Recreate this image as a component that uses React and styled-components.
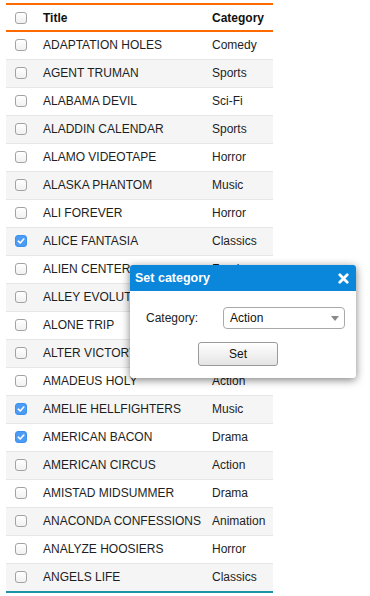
import React from "react";
import styled, { createGlobalStyle } from "styled-components";

const Global = createGlobalStyle`
  html, body { margin: 0; padding: 0; background: #fff; }
  body { font-family: "Liberation Sans", Arial, sans-serif; color: #1e1e1e; }
`;

const Page = styled.div`
  position: relative;
  width: 370px;
  height: 596px;
  padding: 3px 0 0 6px;
  box-sizing: border-box;
`;

const Grid = styled.div`
  width: 267px;
  display: flex;
  flex-direction: column;
`;

const HeaderRow = styled.div`
  display: grid;
  grid-template-columns: 29px 169px 1fr;
  align-items: center;
  height: 25px;
  border-top: 2px solid #ff6a00;
  border-bottom: 2px solid #ff6a00;
  font-weight: bold;
  font-size: 12px;
  color: #111;
`;

const Row = styled.div`
  display: grid;
  grid-template-columns: 29px 169px 1fr;
  align-items: center;
  height: 26px;
  padding-bottom: 1px;
  background: ${(p) => (p.$alt ? "#f5f5f5" : "#fff")};
  border-bottom: ${(p) => (p.$last ? "2px solid #1a93a5" : "1px solid #e6e6e6")};
  font-size: 12px;
  color: #1e1e1e;
`;

const Cell = styled.div`
  padding-left: ${(p) => p.$pl || 8}px;
  white-space: nowrap;
  display: flex;
  align-items: center;
`;

const Box = styled.span`
  display: inline-block;
  width: 12px;
  height: 12px;
  box-sizing: border-box;
  border-radius: 3px;
  border: 1px solid ${(p) => (p.$on ? "#3d8ff0" : "#a3a3a3")};
  background: ${(p) =>
    p.$on ? "#4c9cf6" : "linear-gradient(#ffffff, #f0f0f0)"};
  position: relative;
`;

const Check = () => (
  <svg width="10" height="10" viewBox="0 0 10 10" style={{ position: "absolute", left: 0, top: 0 }}>
    <path d="M2.3 5.2 L4.2 7 L7.8 3" fill="none" stroke="#fff" strokeWidth="1.6" strokeLinecap="round" strokeLinejoin="round" />
  </svg>
);

const Checkbox = ({ on }) => <Box $on={on}>{on && <Check />}</Box>;

const Dialog = styled.div`
  position: absolute;
  left: 130px;
  top: 265px;
  width: 226px;
  height: 113px;
  background: #fff;
  border-radius: 3px;
  box-shadow: 0 2px 9px rgba(0, 0, 0, 0.5);
  overflow: hidden;
  display: flex;
  flex-direction: column;
`;

const DialogHeader = styled.div`
  height: 26px;
  background: #0a86da;
  color: #fff;
  display: flex;
  align-items: center;
  justify-content: space-between;
  padding: 0 7px 0 5px;
  font-weight: bold;
  font-size: 12.5px;
`;

const DialogBody = styled.div`
  padding: 16px 11px 12px 16px;
  display: flex;
  flex-direction: column;
  gap: 13px;
`;

const FieldRow = styled.div`
  display: flex;
  align-items: center;
  font-size: 12px;
  color: #222;
`;

const Label = styled.span`
  width: 77px;
`;

const Select = styled.div`
  width: 122px;
  height: 22px;
  box-sizing: border-box;
  border: 1px solid #a9a9a9;
  border-radius: 4px;
  display: flex;
  align-items: center;
  justify-content: space-between;
  padding: 0 5px 0 6px;
  font-size: 12px;
  color: #111;
  background: #fff;
`;

const Arrow = styled.span`
  width: 0;
  height: 0;
  border-left: 4px solid transparent;
  border-right: 4px solid transparent;
  border-top: 5px solid #8a8a8a;
`;

const ButtonRow = styled.div`
  padding-left: 52px;
  display: flex;
`;

const Button = styled.button`
  width: 80px;
  height: 24px;
  border: 1px solid #9a9a9a;
  border-radius: 3px;
  background: linear-gradient(#ffffff, #e4e4e4);
  font-family: "Liberation Sans", Arial, sans-serif;
  font-size: 12px;
  color: #111;
  padding: 0;
`;

const Close = () => (
  <svg width="11" height="11" viewBox="0 0 11 11">
    <path d="M1.8 1.8 L9.2 9.2 M9.2 1.8 L1.8 9.2" stroke="#fff" strokeWidth="2.8" strokeLinecap="round" />
  </svg>
);

const rows = [
  ["ADAPTATION HOLES", "Comedy"],
  ["AGENT TRUMAN", "Sports"],
  ["ALABAMA DEVIL", "Sci-Fi"],
  ["ALADDIN CALENDAR", "Sports"],
  ["ALAMO VIDEOTAPE", "Horror"],
  ["ALASKA PHANTOM", "Music"],
  ["ALI FOREVER", "Horror"],
  ["ALICE FANTASIA", "Classics", true],
  ["ALIEN CENTER", "Foreign"],
  ["ALLEY EVOLUTION", "Foreign"],
  ["ALONE TRIP", "Music"],
  ["ALTER VICTORY", "Animation"],
  ["AMADEUS HOLY", "Action"],
  ["AMELIE HELLFIGHTERS", "Music", true],
  ["AMERICAN BACON", "Drama", true],
  ["AMERICAN CIRCUS", "Action"],
  ["AMISTAD MIDSUMMER", "Drama"],
  ["ANACONDA CONFESSIONS", "Animation"],
  ["ANALYZE HOOSIERS", "Horror"],
  ["ANGELS LIFE", "Classics"],
];

export default function App() {
  return (
    <Page>
      <Global />
      <Grid>
        <HeaderRow>
          <Cell $pl={9}><Checkbox /></Cell>
          <Cell>Title</Cell>
          <Cell>Category</Cell>
        </HeaderRow>
        {rows.map(([t, c, on], i) => (
          <Row key={t} $alt={i % 2 === 1} $last={i === rows.length - 1}>
            <Cell $pl={9}><Checkbox on={on} /></Cell>
            <Cell>{t}</Cell>
            <Cell>{c}</Cell>
          </Row>
        ))}
      </Grid>
      <Dialog>
        <DialogHeader>
          <span>Set category</span>
          <Close />
        </DialogHeader>
        <DialogBody>
          <FieldRow>
            <Label>Category:</Label>
            <Select>
              <span>Action</span>
              <Arrow />
            </Select>
          </FieldRow>
          <ButtonRow>
            <Button>Set</Button>
          </ButtonRow>
        </DialogBody>
      </Dialog>
    </Page>
  );
}
